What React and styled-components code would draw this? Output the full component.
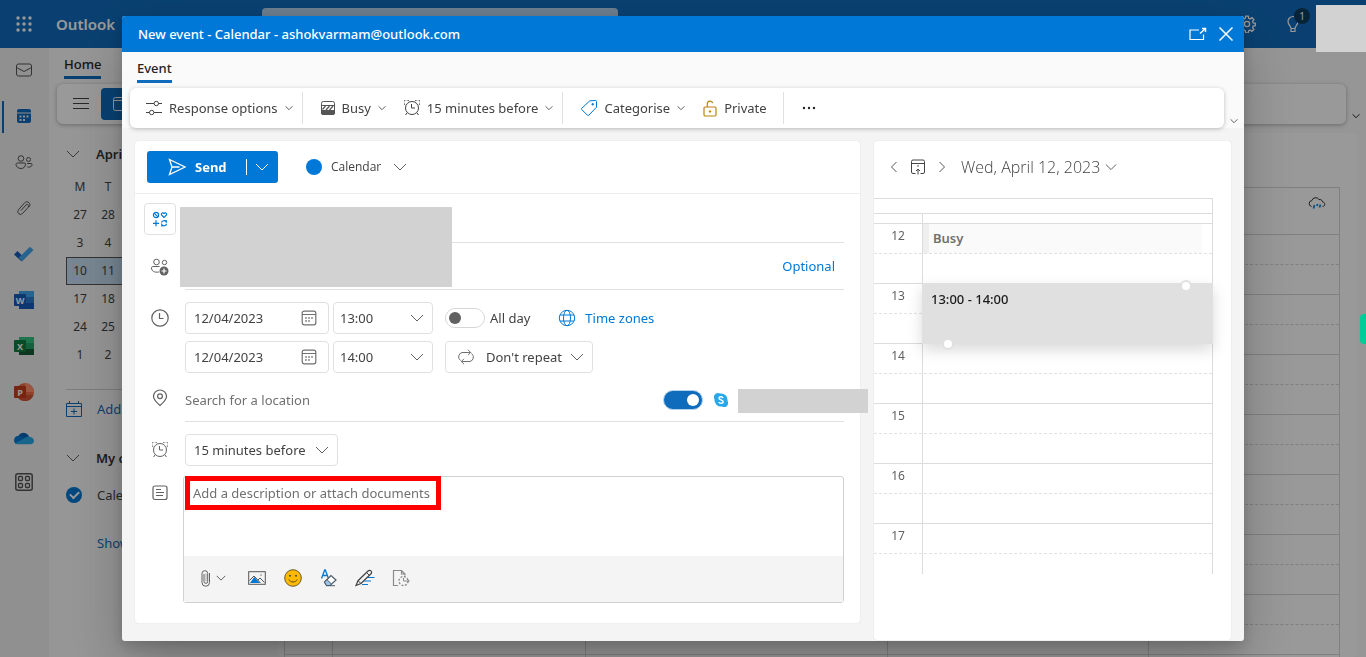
import React from 'react';
import styled, { createGlobalStyle, css } from 'styled-components';

const DAYS = ['M', 'T', 'W', 'T', 'F', 'S', 'S'];
const WEEKS = [
    [27, 28, 29, 30, 31, 1, 2],
    [3, 4, 5, 6, 7, 8, 9],
    [10, 11, 12, 13, 14, 15, 16],
    [17, 18, 19, 20, 21, 22, 23],
    [24, 25, 26, 27, 28, 29, 30],
    [1, 2, 3, 4, 5, 6, 7],
];
const HOURS = [12, 13, 14, 15, 16, 17];
const SLOTS = [0, 1, 2, 3, 4, 5, 6, 7, 8, 9, 10, 11, 12, 13, 14, 15];

/* ---------- icons ---------- */

const Svg = ({ size = 16, w, h, box, color, children }) => (
    <svg
        width={w || size}
        height={h || size}
        viewBox={box || `0 0 ${w || size} ${h || size}`}
        fill='none'
        stroke={color || 'currentColor'}
        strokeWidth='1'
        aria-hidden='true'
    >
        {children}
    </svg>
);

const Chevron = ({ w = 14, color = '#616161' }) => (
    <Svg w={w} h={w} box='0 0 14 14' color={color}>
        <path d='M1 4l6 6 6-6' strokeWidth={14 / w} />
    </Svg>
);

const SideChevron = ({ left }) => (
    <Svg w={8} h={12} color='#555'>
        <path d={left ? 'M6.500 1L1.500 6l5 5' : 'M1.500 1l5 5-5 5'} />
    </Svg>
);

const Waffle = () => (
    <Svg size={16}>
        {[2, 8, 14].map((y) =>
            [2, 8, 14].map((x) => (
                <circle key={`${x}-${y}`} cx={x} cy={y} r='1.7' fill='#fff' stroke='none' />
            )),
        )}
    </Svg>
);

const Gear = () => (
    <Svg size={18}>
        <circle cx='9' cy='9' r='2.6' strokeWidth='1.300' />
        <path
            d='M7.700 1.200h2.600l.4 2.100 1.500.6 1.800-1.200 1.900 1.900-1.300 1.800.6 1.500 2.100.4v2.400l-2.100.4-.6 1.500 1.300 1.800-1.900 1.900-1.800-1.200-1.500.6-.4 2.100H7.700l-.4-2.100-1.500-.6L4 16.300l-1.900-1.900 1.200-1.800-.6-1.500-2-.4V8.300l2-.4.6-1.500L2.100 4.600 4 2.700l1.800 1.200 1.500-.6z'
            strokeWidth='1.300'
        />
    </Svg>
);

const Bulb = () => (
    <Svg w={12} h={18}>
        <path d='M4 13.500c0-2.500-3-3.500-3-7a5 5 0 0 1 10 0c0 3.500-3 4.500-3 7zM4 13.500v3h4v-3' strokeWidth='1.200' />
    </Svg>
);

const MailIcon = () => (
    <Svg w={18} h={16}>
        <rect x='1.500' y='2' width='15' height='12' rx='2' />
        <path d='M1.500 5.500L9 9.500l7.500-4' />
    </Svg>
);

const CalendarFilled = () => (
    <Svg size={16} color='#0f6cbd'>
        <path d='M1 4.500V3a2 2 0 0 1 2-2h10a2 2 0 0 1 2 2v1.500z' fill='#0f6cbd' stroke='none' />
        <path d='M1 5.500h14V13a2 2 0 0 1-2 2H3a2 2 0 0 1-2-2z' fill='#0f6cbd' stroke='none' />
        <g fill='#f0f0f0' stroke='none'>
            <rect x='7' y='7.500' width='2' height='2' />
            <rect x='10.500' y='7.500' width='2' height='2' />
            <rect x='3.500' y='7.500' width='2' height='2' />
            <rect x='3.500' y='11' width='2' height='2' />
            <rect x='7' y='11' width='2' height='2' />
        </g>
    </Svg>
);

const PeopleIcon = () => (
    <Svg w={18} h={16}>
        <circle cx='6' cy='4.500' r='2.800' />
        <circle cx='13.500' cy='5.500' r='2' />
        <path d='M2.500 9h7c.6 0 1 .4 1 1 0 2.800-1.800 4.500-4.500 4.500S1 12.800 1 10.500C1 9.600 1.600 9 2.500 9zM12 9.500h4c.6 0 1 .4 1 1 0 2-1.700 3-4.500 2.500' />
    </Svg>
);

const ClipIcon = () => (
    <Svg w={14} h={16}>
        <path d='M4 10.500l5.200-5.700a1.600 1.600 0 0 1 2.300 2.200L5.500 13.500a2.700 2.700 0 0 1-4-3.700l6-6.900c2.800-3 7.200.8 4.700 3.900' />
    </Svg>
);

const TodoIcon = () => (
    <Svg w={20} h={16}>
        <path d='M0 8.500L3.500 5l7 7-3.200 3.200z' fill='#185abd' stroke='none' />
        <path d='M4.500 12L16 .8 19.500 4 8 15.500z' fill='#41a5ee' stroke='none' />
    </Svg>
);

const OfficeIcon = ({ letter, tones }) => (
    <Svg w={20} h={18}>
        {letter === 'P' ? (
            <>
                <circle cx='11' cy='9' r='9' fill={tones[1]} stroke='none' />
                <path d='M11 0a9 9 0 0 1 9 9h-9z' fill={tones[0]} stroke='none' />
                <path d='M2.500 12A9 9 0 0 0 19.500 12z' fill={tones[2]} stroke='none' />
            </>
        ) : (
            <>
                <path d='M5 0h15v6H5z' fill={tones[0]} stroke='none' />
                <path d='M5 6h15v6H5z' fill={tones[1]} stroke='none' />
                <path d='M5 12h15v6H5z' fill={tones[2]} stroke='none' />
            </>
        )}
        <rect x='0' y='3' width='12' height='12' rx='1' fill={tones[3]} stroke='none' />
        <text x='6' y='12.500' textAnchor='middle' fill='#fff' stroke='none' fontSize='9' fontWeight='700'>
            {letter}
        </text>
    </Svg>
);

const OneDriveIcon = () => (
    <Svg w={20} h={14}>
        <path d='M4 10a5.700 5.700 0 0 1 11-4.500L10 13z' fill='#0364b8' stroke='none' />
        <path d='M4 5a4.200 4.200 0 0 0-1.500 8l10-4C9 6 6 4.500 4 5z' fill='#0078d4' stroke='none' />
        <path d='M10 7.500c2-3 9.500-2.500 10 2.300 0 2-1.500 3.400-3.400 3.400H4c-1.200 0-2-.4-2.600-1z' fill='#28a8ea' stroke='none' />
    </Svg>
);

const AppsIcon = () => (
    <Svg w={18} h={22}>
        <rect x='.8' y='.8' width='16.400' height='16.400' rx='2' strokeWidth='1.500' />
        <rect x='3.500' y='3.500' width='4' height='4' rx='1' strokeWidth='1.300' />
        <rect x='10.500' y='3.500' width='4' height='4' rx='1' strokeWidth='1.300' />
        <rect x='3.500' y='10.500' width='4' height='4' rx='1' strokeWidth='1.300' />
        <rect x='10.500' y='10.500' width='4' height='4' rx='1' strokeWidth='1.300' />
    </Svg>
);

const MenuIcon = () => (
    <Svg size={16}>
        <path d='M0 2.500h16M0 7.500h16M0 12.500h16' />
    </Svg>
);

const NewEventIcon = () => (
    <Svg size={16}>
        <rect x='1.500' y='1.500' width='13' height='13' rx='2' />
        <path d='M1.500 4.500h13' />
    </Svg>
);

const AddCalendarIcon = () => (
    <Svg size={16}>
        <path d='M.5 2.500h15v13H.5zM.5 5.500h15M3.500 0v3M12.500 0v3M8 7.500v6M5 10.500h6' />
    </Svg>
);

const WeatherIcon = () => (
    <Svg w={18} h={14}>
        <path d='M3.500 9.500a3 3 0 0 1 .3-5.900A4 4 0 0 1 11 2.500c3-.2 3.500 1.700 3.500 2.500 3 0 3 4.500 0 4.500' />
        <path d='M6.500 8L5.500 11.500M9.500 7L9 9M12.500 7.500L11.500 10.500' stroke='#0f8be8' strokeWidth='1.800' />
    </Svg>
);

const PopOutIcon = () => (
    <Svg w={18} h={14}>
        <path d='M10 3H1v9.500h13.500V7.500' strokeWidth='1.200' />
        <path d='M11 6.500L16.500 1.500M13 1.500H16.500V5' strokeWidth='1.400' />
    </Svg>
);

const CloseIcon = () => (
    <Svg size={14}>
        <path d='M.5 .5l13 13M13.500 .5L.5 13.500' strokeWidth='1.500' />
    </Svg>
);

const SlidersIcon = () => (
    <Svg size={16}>
        <path d='M0 3.500h8M12.500 3.500H16M0 12.500h3.500M8 12.500h8' />
        <circle cx='10.300' cy='3.500' r='2.200' />
        <circle cx='5.700' cy='12.500' r='2.200' />
    </Svg>
);

const BusyIcon = () => (
    <Svg size={14} color='#555'>
        <rect x='.5' y='.5' width='13' height='13' rx='1.800' />
        <path d='M.5 4.500h13' />
        <path d='M1.500 8.500L4.500 5M5 9l3.500-4M8.500 9L12 5' strokeWidth='1.200' />
        <path d='M.5 9.500h13V12a1.500 1.500 0 0 1-1.500 1.500H2A1.500 1.500 0 0 1 .5 12z' fill='#555' />
    </Svg>
);

const AlarmIcon = () => (
    <Svg size={16} box='1 1.500 16 16'>
        <circle cx='9' cy='9.500' r='6.500' />
        <path d='M8.500 5.500v4h3.500M2.300 6.500A2.800 2.800 0 1 1 6 2.800M15.700 6.500A2.800 2.800 0 1 0 12 2.800M4.200 14.200L2.500 16.500M13.800 14.200l1.700 2.300' />
    </Svg>
);

const TagIcon = () => (
    <Svg size={16} color='#0078d4'>
        <path d='M8.800.8L14.500.5a1 1 0 0 1 1 1v5.700L7.800 15.200a1 1 0 0 1-1.400 0L.8 9.600a1 1 0 0 1 0-1.400z' />
        <circle cx='11.700' cy='4.300' r='.8' fill='#0078d4' />
    </Svg>
);

const LockIcon = () => (
    <Svg w={14} h={17} color='#b8860b'>
        <rect x='1' y='7' width='12' height='9' rx='1.200' strokeWidth='1.200' />
        <path d='M4.300 7V3.500A2.800 2.800 0 0 1 9.800 3.200' strokeWidth='1.200' />
        <circle cx='7' cy='11.500' r='.8' fill='#b8860b' />
    </Svg>
);

const DotsIcon = () => (
    <Svg w={14} h={4}>
        {[2, 7, 12].map((x) => (
            <circle key={x} cx={x} cy='2' r='1.200' fill='#242424' stroke='none' />
        ))}
    </Svg>
);

const SendIcon = () => (
    <Svg size={18}>
        <path d='M1.500 1.500L17 9 1.500 16.500 4 9zM4 9h7.500' strokeWidth='1.300' />
    </Svg>
);

const TemplateIcon = () => (
    <Svg size={16} color='#0078d4'>
        <circle cx='4' cy='4' r='2.600' strokeWidth='1.200' />
        <path d='M2.200 2.200l3.600 3.600M12 6.500L9.500 4c-.8-1.500 1-3 2.500-1.500 1.500-1.500 3.300 0 2.500 1.500zM4 9.300v6M1 12.300h6M9.500 11.500c.5-2 3.500-2.500 4.700-.7V9M14.500 13c-.5 2-3.500 2.500-4.700.7v1.800' strokeWidth='1.200' />
    </Svg>
);

const AttendeesIcon = () => (
    <Svg size={18}>
        <circle cx='5.500' cy='4' r='2.800' />
        <circle cx='13.500' cy='4.500' r='2.200' />
        <path d='M8 14c-4.500.8-7.500-1-7.500-4 0-.8.500-1.500 1.500-1.500h6.500' />
        <circle cx='13' cy='13' r='4.500' fill='#616161' stroke='none' />
        <path d='M13 10.500v5M10.500 13h5' stroke='#fff' strokeWidth='1.200' />
    </Svg>
);

const ClockIcon = () => (
    <Svg size={18}>
        <circle cx='9' cy='9' r='8.200' strokeWidth='1.200' />
        <path d='M8.500 4v5.500h4' strokeWidth='1.200' />
    </Svg>
);

const PinIcon = () => (
    <Svg w={16} h={18}>
        <path d='M8 16.500C5 13.500 1.500 11 1.500 7.500a6.500 6.500 0 0 1 13 0c0 3.500-3.500 6-6.500 9z' strokeWidth='1.200' />
        <circle cx='8' cy='7.300' r='2.400' strokeWidth='1.200' />
    </Svg>
);

const NoteIcon = () => (
    <Svg w={16} h={16}>
        <rect x='1' y='1' width='14' height='13.500' rx='2' strokeWidth='1.200' />
        <path d='M4 4.500h5M4 7.500h8M4 10.500h7' />
    </Svg>
);

const DateIcon = () => (
    <Svg size={16}>
        <rect x='1.200' y='1.200' width='13.600' height='13.600' rx='2' strokeWidth='1.200' />
        <path d='M1 4.500h14' />
        <path d='M4.200 11h1.600M7.200 11h1.600M4.200 8h1.600M7.200 8h1.600M10.200 8h1.600' strokeWidth='1.600' />
    </Svg>
);

const GlobeIcon = () => (
    <Svg size={18} color='#0078d4'>
        <circle cx='9' cy='9' r='7.700' />
        <ellipse cx='9' cy='9' rx='3.500' ry='7.700' />
        <path d='M2 6h14M2 12h14' />
    </Svg>
);

const RepeatIcon = () => (
    <Svg w={18} h={16}>
        <path d='M3.500 11.500A4.500 4.500 0 0 1 5 3.500h8.500M11 .8l2.700 2.700L11 6.200M14.500 4.500A4.500 4.500 0 0 1 13 12.500H4.500M7 9.800l-2.700 2.700L7 15.200' />
    </Svg>
);

const SkypeIcon = () => (
    <Svg size={14}>
        <path d='M4 0a4 4 0 0 0-3.500 6A6.600 6.600 0 0 0 8 13.500 4 4 0 0 0 13.500 8 6.600 6.600 0 0 0 6 .5 4 4 0 0 0 4 0z' fill='#28a8ea' stroke='none' />
        <path d='M9 5c-.6-1.600-4-1.500-4 .2S9.200 7 9.200 8.900 5.500 10.800 4.800 9' stroke='#fff' strokeWidth='1.500' />
    </Svg>
);

const TodayIcon = () => (
    <Svg size={16} color='#444'>
        <path d='M5.500 14.500H3a1.500 1.500 0 0 1-1.500-1.500V2.500A1.500 1.500 0 0 1 3 1h10a1.500 1.500 0 0 1 1.500 1.500V13a1.500 1.500 0 0 1-1.500 1.500h-2.500M1.500 4.500h13M8 15.500v-5M6 12l2-2 2 2M8 6v1.800' />
    </Svg>
);

const AttachIcon = () => (
    <Svg w={10} h={18}>
        <path d='M3 5v7.500a1.800 1.800 0 0 0 3.700 0V4.500A2.800 2.800 0 0 0 1 4.500v9a3.700 3.700 0 0 0 7.500 0V4' stroke='#616161' />
        <path d='M5 4.500v8' stroke='#aaa' />
    </Svg>
);

const PictureIcon = () => (
    <Svg w={18} h={14}>
        <rect x='.7' y='.7' width='16.600' height='12.600' stroke='#555' />
        <path d='M2 12l4.300-6L12 12z' fill='#0078d4' stroke='none' />
        <path d='M1.500 9.500L6 5l6.500 7M10 9l2-2 4.500 4.500' stroke='#555' />
        <circle cx='13' cy='4' r='.8' fill='#777' stroke='none' />
    </Svg>
);

const SmileIcon = () => (
    <Svg size={18}>
        <circle cx='9' cy='9' r='8.300' fill='#ffb900' stroke='#6b5a2a' />
        <circle cx='6' cy='6.800' r='1' fill='#4a4a4a' stroke='none' />
        <circle cx='12' cy='6.800' r='1' fill='#4a4a4a' stroke='none' />
        <path d='M4.800 10.500c1.500 3.300 6.900 3.300 8.400 0' stroke='#5a4a20' />
    </Svg>
);

const FormatIcon = () => (
    <Svg w={16} h={18}>
        <path d='M.5 9.500L3.700 1h.6l3.200 8.500M1.800 6.500h4.400' stroke='#0078d4' strokeWidth='1.300' />
        <path d='M3.500 13l6.500-6.500 5 4.500-6 5.500H5.500z' stroke='#4a5a68' strokeWidth='1.200' fill='#fff' />
        <path d='M3.500 13l2.500-2.300 4.500 4.300-1.500 1.500H5.500z' fill='#9cc5ea' stroke='#4a5a68' />
        <path d='M5 16.700h9' stroke='#4a5a68' />
    </Svg>
);

const DrawIcon = () => (
    <Svg w={20} h={18}>
        <path d='M9 8.500h10.500M8 12h8M7 15.500h6' stroke='#0078d4' />
        <path d='M1 16.500l2-4.800L13 2a2 2 0 0 1 3 2.800L6 14.500z' stroke='#444' strokeWidth='1.200' fill='#f4f4f4' />
        <path d='M11.500 3.500l3 3M3 11.700l3 2.800' stroke='#444' />
    </Svg>
);

const PollIcon = () => (
    <Svg w={18} h={18}>
        <path d='M6 16.500H1.500v-15h8l3.500 3.500v1.500M9.500 1.500V5H13' stroke='#8a8a8a' strokeWidth='1.200' />
        <circle cx='11.500' cy='12' r='4.500' stroke='#8a8a8a' strokeWidth='1.300' strokeDasharray='2 1.500' />
        <path d='M11.500 9v3H17M15 10l2.300 2L15 14' stroke='#8a8a8a' />
    </Svg>
);

/* ---------- page behind the dialog ---------- */

const MailPage = () => (
    <Page>
        <TopBar>
            <IconButton aria-label='App launcher' $size={48}>
                <Waffle />
            </IconButton>
            <Brand>Outlook</Brand>
            <SearchBox aria-label='Search' />
            <TopActions>
                <IconButton aria-label='Settings' $size={46}>
                    <Gear />
                </IconButton>
                <IconButton aria-label='Tips' $size={46}>
                    <Bulb />
                    <Badge>1</Badge>
                </IconButton>
            </TopActions>
        </TopBar>
        <Shell>
            <Rail>
                <RailLink href='#mail' aria-label='Mail'><MailIcon /></RailLink>
                <RailLink href='#calendar' aria-label='Calendar' $active><CalendarFilled /></RailLink>
                <RailLink href='#people' aria-label='People'><PeopleIcon /></RailLink>
                <RailLink href='#files' aria-label='Files'><ClipIcon /></RailLink>
                <RailLink href='#todo' aria-label='To Do'><TodoIcon /></RailLink>
                <RailLink href='#word' aria-label='Word'>
                    <OfficeIcon letter='W' tones={['#41a5ee', '#2b7cd3', '#185abd', '#185abd']} />
                </RailLink>
                <RailLink href='#excel' aria-label='Excel'>
                    <OfficeIcon letter='X' tones={['#33c481', '#21a366', '#185c37', '#107c41']} />
                </RailLink>
                <RailLink href='#powerpoint' aria-label='PowerPoint'>
                    <OfficeIcon letter='P' tones={['#ff8f6b', '#ed6c47', '#d35230', '#c43e1c']} />
                </RailLink>
                <RailLink href='#onedrive' aria-label='OneDrive'><OneDriveIcon /></RailLink>
                <RailLink href='#apps' aria-label='More apps'><AppsIcon /></RailLink>
            </Rail>
            <Main>
                <PageTabs>
                    <Tab>Home</Tab>
                </PageTabs>
                <PageRibbonRow>
                    <PageRibbon>
                        <IconButton aria-label='Menu' $size={32}><MenuIcon /></IconButton>
                        <NewEvent aria-label='New event'><NewEventIcon /></NewEvent>
                    </PageRibbon>
                    <Chevron w={8} color='#222' />
                </PageRibbonRow>
                <Workspace>
                    <Sidebar>
                        <SideHeading><Chevron />April 2023</SideHeading>
                        <MiniCalendar>
                            <thead>
                                <tr>{DAYS.map((d, i) => <th key={i}>{d}</th>)}</tr>
                            </thead>
                            <tbody>
                                {WEEKS.map((week, i) => (
                                    <MiniWeek key={i} $current={i === 2}>
                                        {week.map((d) => <td key={d}>{d}</td>)}
                                    </MiniWeek>
                                ))}
                            </tbody>
                        </MiniCalendar>
                        <SideLink href='#add'><AddCalendarIcon />Add calendar</SideLink>
                        <SideHeading><Chevron />My calendars</SideHeading>
                        <SideCheck>
                            <RoundCheck type='checkbox' defaultChecked />
                            Calendar
                        </SideCheck>
                        <ShowAll href='#all'>Show all</ShowAll>
                    </Sidebar>
                    <WeekCard>
                        <WeekHead><WeatherIcon /></WeekHead>
                        <WeekGrid>
                            {[48, 253, 302, 261].map((width) => (
                                <WeekColumn key={width} $width={width}>
                                    {SLOTS.map((s) => <Slot key={s} />)}
                                </WeekColumn>
                            ))}
                            <WeekColumn>
                                {SLOTS.map((s) => <Slot key={s} />)}
                            </WeekColumn>
                        </WeekGrid>
                    </WeekCard>
                </Workspace>
            </Main>
        </Shell>
    </Page>
);

/* ---------- dialog parts ---------- */

const Picker = ({ label, value, width, icon, compact }) => (
    <PickerBox $width={width} $compact={compact}>
        {icon && <PickerIcon>{icon}</PickerIcon>}
        <select aria-label={label} defaultValue={value}>
            <option>{value}</option>
        </select>
        <PickerArrow><Chevron /></PickerArrow>
    </PickerBox>
);

const DateField = ({ label }) => (
    <DateBox>
        <input aria-label={label} defaultValue='12/04/2023' />
        <DateIcon />
    </DateBox>
);

const DialogRibbon = () => (
    <RibbonRow>
        <Ribbon>
            <Tool><SlidersIcon />Response options<Chevron w={8} /></Tool>
            <Divider />
            <Tool><BusyIcon />Busy<Chevron w={8} /></Tool>
            <Tool><AlarmIcon />15 minutes before<Chevron w={8} /></Tool>
            <Divider />
            <Tool><TagIcon />Categorise<Chevron w={8} /></Tool>
            <Tool $wide><LockIcon />Private</Tool>
            <Divider />
            <Tool aria-label='More options'><DotsIcon /></Tool>
        </Ribbon>
        <Chevron w={8} />
    </RibbonRow>
);

const EventForm = () => (
    <FormPanel>
        <FormTop>
            <SendGroup>
                <SendButton><SendIcon />Send</SendButton>
                <SendMore aria-label='More send options'><Chevron color='#fff' /></SendMore>
            </SendGroup>
            <CalendarPick>
                <CalendarDot />
                Calendar
                <Chevron />
            </CalendarPick>
        </FormTop>
        <People>
            <Row>
                <TemplateButton aria-label='Templates'><TemplateIcon /></TemplateButton>
                <LineField $height={49}>
                    <input aria-label='Title' />
                </LineField>
            </Row>
            <Row>
                <AttendeesIcon />
                <LineField $height={47}>
                    <input aria-label='Attendees' />
                    <Optional>Optional</Optional>
                </LineField>
            </Row>
            <PeopleMask />
        </People>
        <Row $top={12}>
            <ClockIcon />
            <Times>
                <DateField label='Start date' />
                <Picker label='Start time' value='13:00' width={100} compact />
                <AllDay>
                    <Toggle type='checkbox' role='switch' />
                    All day
                </AllDay>
                <ZoneButton><GlobeIcon />Time zones</ZoneButton>
            </Times>
        </Row>
        <Row $top={7}>
            <span />
            <Times>
                <DateField label='End date' />
                <Picker label='End time' value='14:00' width={100} compact />
                <Spacer />
                <Picker label='Repeat' value={"Don't repeat"} width={148} icon={<RepeatIcon />} />
            </Times>
        </Row>
        <Row>
            <PinIcon />
            <LineField $height={49} $low>
                <input aria-label='Location' placeholder='Search for a location' />
                <Toggle type='checkbox' role='switch' aria-label='Skype meeting' defaultChecked />
                <SkypeSlot>
                    <SkypeIcon />
                    <SkypeMask />
                </SkypeSlot>
            </LineField>
        </Row>
        <Row $top={12}>
            <AlarmIcon />
            <div>
                <Picker label='Reminder' value='15 minutes before' width={153} />
            </div>
        </Row>
        <Row $top={10} $start>
            <NoteIcon />
            <Editor>
                <textarea aria-label='Description' placeholder='Add a description or attach documents' />
                <Highlight />
                <EditorBar>
                    <AttachTool aria-label='Attach'><AttachIcon /><Chevron w={10} /></AttachTool>
                    <EditorTool aria-label='Insert picture'><PictureIcon /></EditorTool>
                    <EditorTool aria-label='Emoji'><SmileIcon /></EditorTool>
                    <EditorTool aria-label='Formatting'><FormatIcon /></EditorTool>
                    <EditorTool aria-label='Draw'><DrawIcon /></EditorTool>
                    <EditorTool aria-label='Poll'><PollIcon /></EditorTool>
                </EditorBar>
            </Editor>
        </Row>
    </FormPanel>
);

const DayPanel = () => (
    <DayBox>
        <DayNav>
            <IconButton aria-label='Previous day' $size={24}><SideChevron left /></IconButton>
            <IconButton aria-label='Today' $size={24}><TodayIcon /></IconButton>
            <IconButton aria-label='Next day' $size={24}><SideChevron /></IconButton>
            <DayTitle>Wed, April 12, 2023<Chevron w={12} /></DayTitle>
        </DayNav>
        <Timeline>
            <AllDayStrip />
            <GapStrip><GapCell /></GapStrip>
            {HOURS.map((hour) => (
                <Hour key={hour}>
                    <HourLabel>{hour}</HourLabel>
                    <HourCell />
                </Hour>
            ))}
            <BusyEvent>Busy</BusyEvent>
            <NewSlot>
                13:00 - 14:00
                <Handle $top />
                <Handle />
            </NewSlot>
        </Timeline>
    </DayBox>
);

const App = () => {
    return (
        <>
            <GlobalStyle />
            <MailPage />
            <Overlay>
                <Dialog role='dialog' aria-labelledby='dialog-title'>
                    <TitleBar>
                        <Title id='dialog-title'>New event - Calendar - ashokvarmam@outlook.com</Title>
                        <IconButton aria-label='Open in new window' $size={28}><PopOutIcon /></IconButton>
                        <IconButton aria-label='Close' $size={28}><CloseIcon /></IconButton>
                    </TitleBar>
                    <RibbonArea>
                        <DialogTabs><Tab>Event</Tab></DialogTabs>
                        <DialogRibbon />
                    </RibbonArea>
                    <DialogBody>
                        <EventForm />
                        <DayPanel />
                    </DialogBody>
                </Dialog>
            </Overlay>
            <AccountMask />
            <EdgeTab />
        </>
    );
};

export default App;

const GlobalStyle = createGlobalStyle`
    * {
        box-sizing: border-box;
    }
    body {
        margin: 0;
        overflow: hidden;
        color: #424242;
        font-family: 'Noto Sans', 'Open Sans', sans-serif;
        font-size: 13px;
        line-height: 20px;
    }
    button, input, select, textarea {
        margin: 0;
        padding: 0;
        border: 0;
        background: none;
        color: inherit;
        font: inherit;
        outline: none;
    }
    a {
        text-decoration: none;
    }
    svg {
        display: block;
        flex: none;
    }
`;

const Page = styled.div`
    display: flex;
    flex-direction: column;
    height: 100vh;
    overflow: hidden;
    background-color: #fafafa;
`;

const TopBar = styled.header`
    flex: none;
    display: flex;
    align-items: center;
    height: 48px;
    padding-right: 50px;
    background-color: #0f6cbd;
    color: #fff;
`;

const IconButton = styled.button`
    position: relative;
    display: flex;
    align-items: center;
    justify-content: center;
    width: ${({ $size }) => $size}px;
    height: ${({ $size }) => $size}px;
`;

const Brand = styled.div`
    width: 214px;
    padding-left: 8px;
    font-size: 15px;
    font-weight: 600;
`;

const SearchBox = styled.input`
    width: 356px;
    height: 32px;
    border-radius: 4px;
    background-color: #b4d1ee;
`;

const TopActions = styled.div`
    display: flex;
    margin-left: auto;
`;

const Badge = styled.span`
    position: absolute;
    top: 7px;
    right: 6px;
    width: 16px;
    height: 16px;
    border-radius: 50%;
    background-color: #0c3b5e;
    font-size: 10px;
    line-height: 16px;
`;

const Shell = styled.div`
    flex: 1;
    display: flex;
    min-height: 0;
`;

const Rail = styled.nav`
    flex: none;
    width: 49px;
    background-color: #f0f0f0;
`;

const RailLink = styled.a`
    display: flex;
    align-items: center;
    justify-content: center;
    height: 46px;
    padding: 0 2px 2px 0;
    color: #555;
    ${({ $active }) =>
        $active &&
        css`
            background: linear-gradient(#0f6cbd, #0f6cbd) 2px 50% / 2px 32px no-repeat;
        `}
`;

const Main = styled.main`
    flex: 1;
    display: flex;
    flex-direction: column;
    min-width: 0;
    padding-left: 8px;
`;

const PageTabs = styled.div`
    display: flex;
    height: 36px;
    padding: 5px 7px;
`;

const DialogTabs = styled.div`
    display: flex;
    height: 36px;
    padding: 5px 15px;
`;

const Tab = styled.button`
    height: 26px;
    padding-bottom: 2px;
    border-bottom: 3px solid #0f6cbd;
    color: #242424;
    font-weight: 500;
`;

const PageRibbonRow = styled.div`
    display: flex;
    align-items: flex-end;
    gap: 6px;
    padding-right: 6px;
    & > svg {
        margin-bottom: 4px;
    }
`;

const PageRibbon = styled.div`
    flex: 1;
    display: flex;
    align-items: center;
    gap: 4px;
    height: 40px;
    padding: 0 8px;
    border-radius: 6px;
    background-color: #fff;
    box-shadow: 0 1px 4px rgba(0, 0, 0, 0.3);
`;

const NewEvent = styled.button`
    width: 120px;
    height: 32px;
    padding-left: 11px;
    border-radius: 4px;
    background-color: #0f6cbd;
    color: #fff;
`;

const Workspace = styled.div`
    flex: 1;
    display: flex;
    min-height: 0;
    padding: 9px 8px 0 0;
`;

const Sidebar = styled.aside`
    flex: none;
    display: flex;
    flex-direction: column;
    width: 220px;
    padding: 7px 8px 0 9px;
`;

const SideHeading = styled.div`
    display: flex;
    align-items: center;
    gap: 16px;
    height: 28px;
    margin-bottom: 5px;
    font-weight: 600;
    color: #333;
`;

const MiniCalendar = styled.table`
    width: 196px;
    margin-bottom: 20px;
    border-collapse: collapse;
    table-layout: fixed;
    font-size: 12px;
    text-align: center;
    th,
    td {
        height: 28px;
        padding: 0;
        font-weight: 400;
    }
`;

const MiniWeek = styled.tr`
    ${({ $current }) =>
        $current &&
        css`
            background-color: #c7e0f4;
            outline: 1px solid #555;
            outline-offset: -1px;
        `}
`;

const SideLink = styled.a`
    display: flex;
    align-items: center;
    gap: 15px;
    height: 38px;
    margin-bottom: 17px;
    border-top: 1px solid #d0d0d0;
    color: #0f6cbd;
`;

const SideCheck = styled.label`
    display: flex;
    align-items: center;
    gap: 15px;
    height: 36px;
`;

const RoundCheck = styled.input`
    appearance: none;
    display: grid;
    place-items: center;
    width: 16px;
    height: 16px;
    border-radius: 50%;
    background-color: #0078d4;
    &::before {
        content: '';
        width: 7px;
        height: 4px;
        margin-bottom: 2px;
        border: solid #fff;
        border-width: 0 0 2px 2px;
        transform: rotate(-45deg);
    }
`;

const ShowAll = styled.a`
    padding: 20px 0 0 31px;
    color: #0f6cbd;
`;

const WeekCard = styled.section`
    flex: 1;
    padding: 54px 18px 0 7px;
    border-radius: 6px;
    background-color: #fff;
`;

const WeekHead = styled.div`
    display: flex;
    justify-content: flex-end;
    height: 47px;
    padding: 9px 13px;
    border: 1px solid #d6d6d6;
    border-bottom: 0;
    color: #333;
`;

const WeekGrid = styled.div`
    display: flex;
    border-left: 1px solid #d6d6d6;
`;

const WeekColumn = styled.div`
    flex: ${({ $width }) => ($width ? `0 0 ${$width}px` : '1')};
    border-right: 1px solid #d6d6d6;
`;

const Slot = styled.div`
    height: 30px;
    border-top: 1px solid #d6d6d6;
    &:nth-child(even) {
        border-top-style: dashed;
    }
`;

const Overlay = styled.div`
    position: fixed;
    inset: 0;
    display: flex;
    padding: 16px 122px;
    background-color: rgba(0, 0, 0, 0.4);
`;

const Dialog = styled.div`
    flex: 1;
    display: flex;
    flex-direction: column;
    min-width: 0;
    border-radius: 3px;
    background-color: #f4f4f4;
    box-shadow: 0 26px 58px rgba(0, 0, 0, 0.22), 0 5px 14px rgba(0, 0, 0, 0.18);
    overflow: hidden;
`;

const TitleBar = styled.div`
    flex: none;
    display: flex;
    align-items: center;
    height: 36px;
    padding: 0 4px 0 16px;
    background-color: #0078d7;
    color: #fff;
`;

const Title = styled.h2`
    flex: 1;
    margin: 0;
    font-size: 13px;
    font-weight: 500;
`;

const RibbonArea = styled.div`
    background-color: #fafafa;
`;

const RibbonRow = styled.div`
    display: flex;
    align-items: flex-end;
    gap: 6px;
    padding: 0 6px 0 8px;
    & > svg {
        margin-bottom: 3px;
    }
`;

const Ribbon = styled.div`
    flex: 1;
    display: flex;
    align-items: center;
    gap: 9px;
    height: 40px;
    padding: 0 7px;
    border-radius: 6px;
    background-color: #fff;
    box-shadow: 0 1px 4px rgba(0, 0, 0, 0.25);
`;

const Tool = styled.button`
    display: flex;
    align-items: center;
    gap: 7px;
    padding: 0 ${({ $wide }) => ($wide ? 7 : 0)}px 0 9px;
    color: #424242;
`;

const Divider = styled.div`
    width: 1px;
    height: 32px;
    background-color: #e0e0e0;
`;

const DialogBody = styled.div`
    flex: 1;
    display: flex;
    align-items: flex-start;
    gap: 14px;
    min-height: 0;
    padding: 13px 13px 1px;
`;

const panel = css`
    border-radius: 3px;
    background-color: #fff;
    box-shadow: 0 0 1px rgba(0, 0, 0, 0.2);
`;

const FormPanel = styled.section`
    ${panel}
    flex: 1;
    min-width: 0;
    padding-bottom: 20px;
`;

const FormTop = styled.div`
    display: flex;
    align-items: center;
    gap: 28px;
    height: 53px;
    padding-left: 12px;
    border-bottom: 1px solid #ededed;
`;

const SendGroup = styled.div`
    display: flex;
    align-items: center;
    height: 32px;
    border-radius: 3px;
    background-color: #0078d7;
    color: #fff;
`;

const SendButton = styled.button`
    display: flex;
    align-items: center;
    gap: 9px;
    width: 99px;
    padding-left: 21px;
    font-weight: 700;
`;

const SendMore = styled.button`
    display: flex;
    align-items: center;
    width: 32px;
    height: 16px;
    padding-left: 8px;
    border-left: 1px solid #fff;
`;

const CalendarPick = styled.button`
    display: flex;
    align-items: center;
    gap: 9px;
    font-family: 'Open Sans', sans-serif;
    font-size: 12px;
    & > svg {
        margin-left: 3px;
    }
`;

const CalendarDot = styled.span`
    width: 16px;
    height: 16px;
    border-radius: 50%;
    background-color: #0078d7;
`;

const Row = styled.div`
    display: grid;
    grid-template-columns: 50px 1fr;
    align-items: ${({ $start }) => ($start ? 'start' : 'center')};
    padding: ${({ $top = 0 }) => $top}px 16px 0 0;
    color: #616161;
    & > svg,
    & > button {
        justify-self: center;
    }
    & > svg {
        margin-top: ${({ $start }) => ($start ? 9 : 0)}px;
    }
`;

const People = styled.div`
    position: relative;
`;

const PeopleMask = styled.div`
    position: absolute;
    top: 13px;
    left: 45px;
    width: 272px;
    height: 80px;
    background-color: #d2d2d2;
`;

const TemplateButton = styled.button`
    display: grid;
    place-items: center;
    width: 32px;
    height: 32px;
    border: 1px solid #e0e0e0;
    border-radius: 4px;
`;

const LineField = styled.div`
    display: flex;
    align-items: center;
    height: ${({ $height }) => $height}px;
    padding-top: ${({ $low }) => ($low ? 6 : 0)}px;
    border-bottom: 1px solid #e0e0e0;
    & > input:first-child {
        flex: 1;
        min-width: 0;
    }
    input::placeholder {
        color: #707070;
        opacity: 1;
    }
`;

const Optional = styled.button`
    padding-right: 9px;
    color: #0078d4;
`;

const Times = styled.div`
    display: flex;
    align-items: center;
    gap: 4px;
`;

const fieldBox = css`
    height: 32px;
    border: 1px solid #e0e0e0;
    border-radius: 4px;
    color: #424242;
`;

const DateBox = styled.div`
    ${fieldBox}
    display: flex;
    align-items: center;
    width: 144px;
    padding: 0 11px 0 8px;
    & > input {
        flex: 1;
        min-width: 0;
    }
    & > svg {
        color: #707070;
    }
`;

const PickerBox = styled.div`
    ${fieldBox}
    position: relative;
    display: flex;
    align-items: center;
    width: ${({ $width }) => $width}px;
    padding-left: ${({ $compact }) => ($compact ? 6 : 8)}px;
    & > select {
        flex: 1;
        min-width: 0;
        height: 30px;
        appearance: none;
    }
`;

const PickerIcon = styled.span`
    padding: 0 11px 0 3px;
    color: #707070;
`;

const PickerArrow = styled.span`
    position: absolute;
    right: 8px;
    pointer-events: none;
`;

const Spacer = styled.span`
    width: 4px;
`;

const AllDay = styled.label`
    display: flex;
    align-items: center;
    gap: 5px;
    margin: 0 24px 0 8px;
    color: #424242;
`;

const Toggle = styled.input`
    appearance: none;
    display: flex;
    align-items: center;
    width: 40px;
    height: 20px;
    padding: 0 3px;
    border: 1px solid #d6d6d6;
    border-radius: 10px;
    &::before {
        content: '';
        width: 12px;
        height: 12px;
        border-radius: 50%;
        background-color: #616161;
    }
    &:checked {
        justify-content: flex-end;
        border-color: #b5d2ec;
        background-color: #0f6cbd;
    }
    &:checked::before {
        background-color: #fff;
    }
`;

const ZoneButton = styled.button`
    display: flex;
    align-items: center;
    gap: 9px;
    color: #0078d4;
`;

const SkypeSlot = styled.div`
    position: relative;
    width: 141px;
    padding-left: 11px;
`;

const SkypeMask = styled.div`
    position: absolute;
    top: -4px;
    left: 35px;
    width: 130px;
    height: 24px;
    background-color: #d2d2d2;
`;

const Editor = styled.div`
    position: relative;
    display: flex;
    flex-direction: column;
    margin-left: -2px;
    border: 1px solid #d0d0d0;
    border-radius: 3px;
    & > textarea {
        height: 79px;
        padding: 6px 9px;
        resize: none;
    }
    & > textarea::placeholder {
        color: #707070;
        opacity: 1;
    }
`;

const Highlight = styled.div`
    position: absolute;
    top: -1px;
    left: 1px;
    width: 256px;
    height: 34px;
    border: 5px solid #f00;
    pointer-events: none;
`;

const EditorBar = styled.div`
    display: flex;
    align-items: center;
    gap: 18px;
    height: 46px;
    padding: 0 17px 2px;
    background-color: #f4f4f4;
`;

const EditorTool = styled.button`
    display: flex;
    justify-content: center;
    width: 18px;
`;

const AttachTool = styled.button`
    display: flex;
    align-items: center;
    gap: 5px;
    margin-right: 4px;
`;

const DayBox = styled.section`
    ${panel}
    flex: none;
    align-self: stretch;
    width: 357px;
    padding-right: 18px;
`;

const DayNav = styled.div`
    display: flex;
    align-items: center;
    height: 57px;
    padding: 0 0 6px 8px;
`;

const DayTitle = styled.button`
    display: flex;
    align-items: center;
    gap: 5px;
    padding-left: 7px;
    font-family: 'Open Sans', sans-serif;
    font-size: 16px;
    font-weight: 300;
`;

const Timeline = styled.div`
    position: relative;
    width: 339px;
    border-top: 1px solid #dcdcdc;
    border-right: 1px solid #dcdcdc;
`;

const AllDayStrip = styled.div`
    height: 14px;
`;

const GapStrip = styled.div`
    height: 10px;
    padding-left: 48px;
    border-top: 1px solid #dcdcdc;
`;

const GapCell = styled.div`
    height: 100%;
    border-left: 1px solid #dcdcdc;
`;

const Hour = styled.div`
    display: grid;
    grid-template-columns: 48px 1fr;
    height: 60px;
    border-top: 1px solid #dcdcdc;
    background: repeating-linear-gradient(90deg, #e2e2e2 0 3px, transparent 3px 5px) 0 29px / 100% 1px no-repeat;
    &:nth-child(8) {
        height: 51px;
    }
`;

const HourLabel = styled.div`
    padding-top: 2px;
    font-size: 12px;
    text-align: center;
    color: #616161;
`;

const HourCell = styled.div`
    border-left: 1px solid #dcdcdc;
`;

const BusyEvent = styled.div`
    position: absolute;
    top: 25px;
    left: 49px;
    right: 10px;
    height: 29px;
    padding: 4px;
    border-left: 6px solid #efefef;
    background-color: #fafafa;
    font-weight: 600;
    color: #707070;
`;

const NewSlot = styled.div`
    position: absolute;
    top: 84px;
    left: 48px;
    right: -1px;
    height: 61px;
    padding: 6px 9px;
    background-color: #e0e0e0;
    box-shadow: 0 6px 14px rgba(0, 0, 0, 0.15);
    font-weight: 500;
    color: #1b1b1b;
`;

const Handle = styled.span`
    position: absolute;
    ${({ $top }) => ($top ? 'top: -3px; right: 21px;' : 'bottom: -6px; left: 20px;')}
    width: 12px;
    height: 12px;
    border: 2px solid #e0e0e0;
    border-radius: 50%;
    background-color: #fff;
`;

const AccountMask = styled.div`
    position: fixed;
    top: 5px;
    right: 0;
    width: 50px;
    height: 47px;
    background-color: #d2d2d2;
`;

const EdgeTab = styled.div`
    position: fixed;
    top: 314px;
    right: 0;
    width: 6px;
    height: 30px;
    border-radius: 4px 0 0 4px;
    background-color: #00cc99;
`;
